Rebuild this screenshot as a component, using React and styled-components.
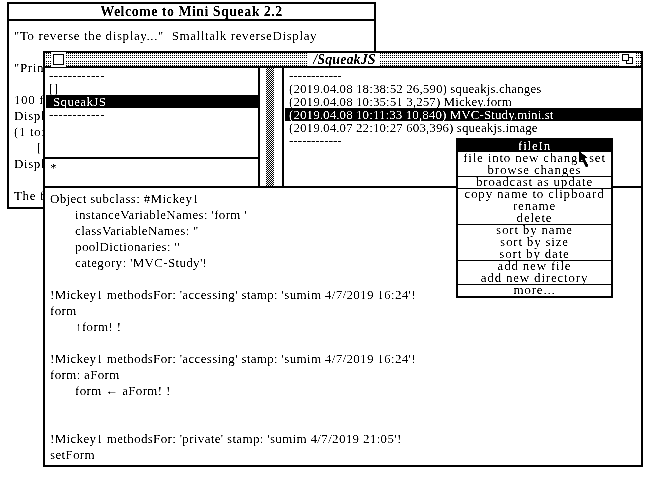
import React from "react";
import styled, { createGlobalStyle } from "styled-components";

const GlobalStyle = createGlobalStyle`
  html, body {
    margin: 0;
    padding: 0;
    background: #fff;
  }
`;

const Desktop = styled.div`
  position: relative;
  width: 672px;
  height: 501px;
  overflow: hidden;
  background: #fff;
  color: #000;
  font-family: "Liberation Serif", "Times New Roman", serif;
  font-size: 13px;
  letter-spacing: 0.33px;
  filter: grayscale(1) contrast(3);
`;

const TopEdge = styled.div`
  height: 1px;
  background: #ccc;
`;

const Window = styled.div`
  position: absolute;
  left: ${(p) => p.$x}px;
  top: ${(p) => p.$y}px;
  width: ${(p) => p.$w}px;
  height: ${(p) => p.$h}px;
  box-sizing: border-box;
  border: 2px solid #000;
  background: #fff;
  display: flex;
  flex-direction: column;
`;

const PlainTitle = styled.div`
  height: 15px;
  border-bottom: 2px solid #000;
  text-align: center;
  font-weight: bold;
  font-size: 14px;
  line-height: 15px;
  letter-spacing: 0.45px;
  flex: none;
`;

const WelcomeText = styled.pre`
  margin: 0;
  padding: 7px 0 0 5px;
  font: inherit;
  letter-spacing: 0.6px;
  line-height: 16px;
  flex: 1;
  min-height: 0;
  overflow: hidden;
`;

const TitleBar = styled.div`
  height: 13px;
  flex: none;
  display: flex;
  align-items: center;
  border-bottom: 2px solid #000;
  padding: 0 1px;
  background-color: #fff;
  background-image: linear-gradient(transparent 6px, #fff 6px, #fff 8px, transparent 8px),
    conic-gradient(#000 25%, #fff 0);
  background-size: 100% 100%, 2px 2px;
`;

const TitleFill = styled.div`
  flex: 1;
  height: 100%;
`;

const CloseBox = styled.div`
  width: 9px;
  height: 9px;
  margin: 0 5px 0 7px;
  border: 1px solid #000;
  background: #fff;
  box-shadow: 0 0 0 2px #fff;
`;

const TitleName = styled.div`
  margin-left: 4px;
  padding: 0 4px 0 5px;
  background: #fff;
  height: 100%;
  font-weight: bold;
  font-style: italic;
  font-size: 14px;
  line-height: 13px;
  letter-spacing: 0.1px;
`;

const CollapseBox = styled.svg`
  width: 16px;
  height: 13px;
  margin: 0 4px 0 5px;
  background: #fff;
  flex: none;
`;

const Browser = styled.div`
  height: 118px;
  flex: none;
  display: grid;
  grid-template-columns: 213px 26px 1fr;
  border-bottom: 2px solid #000;
`;

const LeftPane = styled.div`
  display: flex;
  flex-direction: column;
  min-height: 0;
`;

const List = styled.div`
  padding-top: 1px;
  flex: 1;
`;

const PatternPane = styled.div`
  height: 27px;
  flex: none;
  border-top: 2px solid #000;
  padding-left: 5px;
  line-height: 17px;
`;

const Row = styled.div`
  height: 13px;
  line-height: 13px;
  margin-left: 1px;
  padding-left: ${(p) => p.$indent}px;
  white-space: pre;
  background: ${(p) => (p.$selected ? "#000" : "transparent")};
  color: ${(p) => (p.$selected ? "#fff" : "#000")};
`;

const ScrollGutter = styled.div`
  border-left: 2px solid #000;
  border-right: 2px solid #000;
  padding: 0 8px 0 6px;
`;

const ScrollThumb = styled.div`
  height: 100%;
  background-color: #fff;
  background-image: repeating-conic-gradient(#000 0 25%, #fff 0 50%);
  background-size: 2px 2px;
`;

const FilePane = styled.div`
  padding-top: 1px;
`;

const FileRow = styled(Row)`
  letter-spacing: 0.08px;
`;

const ContentsPane = styled.pre`
  margin: 0;
  padding: 3px 0 0 5px;
  font: inherit;
  line-height: 16px;
  flex: 1;
`;

const Menu = styled.div`
  position: absolute;
  left: 456px;
  top: 138px;
  width: 157px;
  box-sizing: border-box;
  border: 2px solid #000;
  background: #fff;
  text-align: center;
  line-height: 12px;
  letter-spacing: 0.8px;
`;

const MenuTitle = styled.div`
  height: 12px;
  background: #000;
  color: #fff;
`;

const MenuGroup = styled.div`
  ${(p) =>
    !p.$first &&
    `
    border-top: 1px solid #000;
    & > div:first-child {
      height: 11px;
      line-height: 10px;
    }
  `}
`;

const MenuItem = styled.div`
  height: 12px;
`;

const Pointer = styled.svg`
  position: absolute;
  left: 578px;
  top: 151px;
  width: 11px;
  height: 17px;
`;

const menuGroups = [
  ["file into new change set", "browse changes"],
  ["broadcast as update"],
  ["copy name to clipboard", "rename", "delete"],
  ["sort by name", "sort by size", "sort by date"],
  ["add new file", "add new directory"],
  ["more..."],
];

const files = [
  "(2019.04.08 18:38:52 26,590) squeakjs.changes",
  "(2019.04.08 10:35:51 3,257) Mickey.form",
  "(2019.04.08 10:11:33 10,840) MVC-Study.mini.st",
  "(2019.04.07 22:10:27 603,396) squeakjs.image",
];

const source = `Object subclass: #Mickey1
       instanceVariableNames: 'form '
       classVariableNames: ''
       poolDictionaries: ''
       category: 'MVC-Study'!

!Mickey1 methodsFor: 'accessing' stamp: 'sumim 4/7/2019 16:24'!
form
       \u2191form! !

!Mickey1 methodsFor: 'accessing' stamp: 'sumim 4/7/2019 16:24'!
form: aForm
       form \u2190 aForm! !


!Mickey1 methodsFor: 'private' stamp: 'sumim 4/7/2019 21:05'!
setForm`;

const welcome = `"To reverse the display..."  Smalltalk reverseDisplay

"Prin

100 f
Displ
(1 to:
      [
Displ

The f
'`;

const App = () => {
  return (
    <Desktop>
      <GlobalStyle />
      <TopEdge />
      <Window $x={7} $y={2} $w={369} $h={207}>
        <PlainTitle>Welcome to Mini Squeak 2.2</PlainTitle>
        <WelcomeText>{welcome}</WelcomeText>
      </Window>

      <Window $x={43} $y={51} $w={600} $h={416}>
        <TitleBar>
          <CloseBox />
          <TitleFill />
          <TitleName>/SqueakJS</TitleName>
          <TitleFill />
          <CollapseBox viewBox="0 0 16 13">
            <path
              d="M2.5 1.5h6v6h-6zM8.5 4.5h4v6h-6v-3"
              fill="none"
              stroke="#000"
              shapeRendering="crispEdges"
            />
          </CollapseBox>
        </TitleBar>
        <Browser>
          <LeftPane>
            <List>
              <Row $indent={3}>------------</Row>
              <Row $indent={3}>[]</Row>
              <Row $selected $indent={7}>SqueakJS</Row>
              <Row $indent={3}>------------</Row>
            </List>
            <PatternPane>*</PatternPane>
          </LeftPane>
          <ScrollGutter>
            <ScrollThumb />
          </ScrollGutter>
          <FilePane>
            <FileRow $indent={4}>------------</FileRow>
            {files.map((f, i) => (
              <FileRow key={f} $indent={4} $selected={i === 2}>{f}</FileRow>
            ))}
            <FileRow $indent={4}>------------</FileRow>
          </FilePane>
        </Browser>
        <ContentsPane>{source}</ContentsPane>
      </Window>

      <Menu>
        <MenuTitle>fileIn</MenuTitle>
        {menuGroups.map((group, i) => (
          <MenuGroup key={group[0]} $first={i === 0}>
            {group.map((item) => (
              <MenuItem key={item}>{item}</MenuItem>
            ))}
          </MenuGroup>
        ))}
      </Menu>

      <Pointer viewBox="0 0 11 17">
        <path d="M1 0 L1 11 L4 8.5 L8 16.5 L10.5 15 L6.5 7.5 L10 7 Z" fill="#000" />
      </Pointer>
    </Desktop>
  );
};

export default App;
